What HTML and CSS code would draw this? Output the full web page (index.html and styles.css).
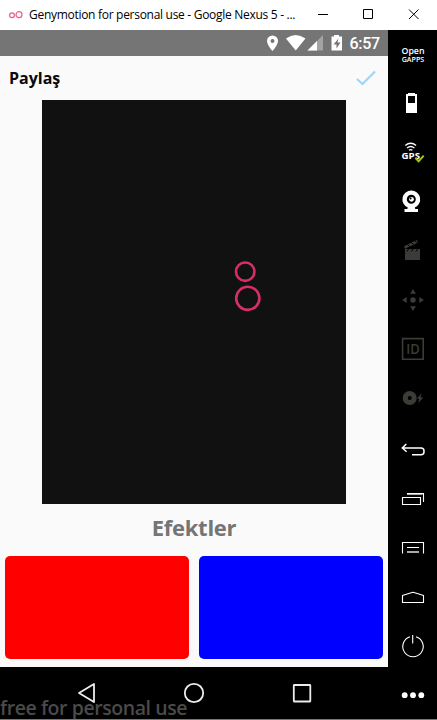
FILE: index.html
```html
<!DOCTYPE html>
<html lang="tr">
<head>
<meta charset="utf-8">
<title>Genymotion</title>
<link rel="stylesheet" href="styles.css">
</head>
<body>
<div class="window">
  <header class="titlebar">
    <svg class="logo" width="16" height="12" viewBox="0 0 16 12"><circle cx="4" cy="6.3" r="2.4"/><circle cx="11" cy="5.7" r="3"/></svg>
    <span class="title">Genymotion for personal use - Google Nexus 5 - ...</span>
    <svg class="controls" width="120" height="30" viewBox="0 0 120 30"><path d="M1 14.5h10M46.500 9.500h9v9h-9zM92 9.500l9.500 9.500M101.500 9.500L92 19"/></svg>
  </header>
  <div class="body">
    <main class="phone">
      <div class="status">
        <svg width="82" height="26" viewBox="0 0 82 26">
          <path d="M6.500 5.500a5.500 5.500 0 0 0-5.500 5.500c0 4 5.500 10 5.500 10s5.500-6 5.500-10a5.500 5.500 0 0 0-5.500-5.500zm0 3.500a2 2 0 1 1 0 4 2 2 0 0 1 0-4z" fill-rule="evenodd"/>
          <path d="M20 8.500Q29.500 1.500 39.500 8.500L29.700 20.500z"/>
          <path class="dim" d="M57 5v15.500H41.500z"/><path d="M51 11v9.500h-9.500z"/>
          <path fill-rule="evenodd" d="M68 5h5v1.500h3v14H65.500v-14H68zM72.500 8.500l-5 6h3v4l4-6h-3z"/>
        </svg>
        <span class="clock">6:57</span>
      </div>
      <div class="appbar">
        <h1>Paylaş</h1>
        <svg width="22" height="18" viewBox="0 0 22 18"><path d="M1 10l5.500 5L19 2.500"/></svg>
      </div>
      <div class="preview">
        <svg width="304" height="404" viewBox="0 0 304 404"><circle cx="203.200" cy="171.700" r="9.200"/><circle cx="205.800" cy="198.300" r="11.600"/></svg>
      </div>
      <h2>Efektler</h2>
      <div class="effects"><div class="card red"></div><div class="card blue"></div></div>
      <div class="navbar">
        <svg width="388" height="52" viewBox="0 0 388 52"><path d="M94 17v18L79 26z"/><circle cx="194" cy="26" r="9.200"/><rect x="293.800" y="18" width="16.500" height="16.500" rx=".5"/></svg>
        <span class="watermark">free for personal use</span>
      </div>
    </main>
    <aside class="tools">
      <svg viewBox="0 0 49 49"><text class="open" x="13.500" y="24" textLength="23" lengthAdjust="spacingAndGlyphs">Open</text><text class="gapps" x="13.700" y="31.800" textLength="22.500" lengthAdjust="spacingAndGlyphs">GAPPS</text></svg>
      <svg viewBox="0 0 49 49"><path fill-rule="evenodd" d="M20 14h7v1h2v19H18V15h2zM20 17v7h7v-7z"/></svg>
      <svg viewBox="0 0 49 49"><path class="line thick" d="M17.300 17.500q5.400-4.500 10.800 0M19 20q3.700-3 7.400 0M21 22.300q1.700-1.300 3.400 0"/><text class="gps" x="13.500" y="31" textLength="18.500" lengthAdjust="spacingAndGlyphs">GPS</text><path class="tick" d="M27.500 30l3.200 3.300 5-5.600"/></svg>
      <svg viewBox="0 0 49 49"><path fill-rule="evenodd" d="M23.300 13.500a8.800 8.800 0 0 1 3.500 16.900l.5 1.600H30v3H16.500v-3h2.800l.5-1.600a8.800 8.800 0 0 1 3.500-16.900zm0 4.300a4.500 4.500 0 1 0 0 9 4.500 4.500 0 0 0 0-9z"/><circle cx="23.500" cy="22.300" r="2.400"/><circle class="hole" cx="22.600" cy="21.500" r="1"/></svg>
      <svg class="off" viewBox="0 0 49 49"><path d="M17 23h15v11H17zM16 20.300l13-6.300.8 2.700L17 22.700z"/><path class="cut" d="M19.500 18.500l2 2M23.500 16.500l2 2M27 14.800l2 2M20.500 23L19 25.500M25 23l-1.500 2.500M29.500 23L28 25.500"/></svg>
      <svg class="off" viewBox="0 0 49 49"><circle cx="25" cy="25" r="2.700"/><path d="M25 14l2.900 4.700h-5.800zM25 36l2.900-4.700h-5.800zM14 25l4.700-2.900v5.800zM36 25l-4.700-2.900v5.800z"/></svg>
      <svg class="off" viewBox="0 0 49 49"><path class="frame" d="M14.600 14.600h20.600v20.600H14.600z"/><text class="id" x="18.300" y="29.900" textLength="13.500" lengthAdjust="spacingAndGlyphs">ID</text></svg>
      <svg class="off" viewBox="0 0 49 49"><path fill-rule="evenodd" d="M21.700 18a7 7 0 1 1 0 14 7 7 0 0 1 0-14zm0 5a2 2 0 1 0 0 4 2 2 0 0 0 0-4z"/><path d="M33.300 20.500l-4.500 5.200h2.500L30.300 30l5-5.500h-2.700z"/></svg>
      <svg class="back" viewBox="0 0 49 49"><path class="line mid" d="M18.300 19l-4 4 4.400 3.700M14.500 23H33q3 0 3 3v.8q0 3-3 3h-9"/></svg>
      <svg viewBox="0 0 49 49"><path class="line" d="M14.500 23.500h18v7h-18zM19 19.500h16.500V28"/><path class="line soft" d="M19 20.500h15.500"/></svg>
      <svg viewBox="0 0 49 49"><path class="line" d="M14.500 30.500v-11h21v11M19 24.500h12"/><path class="line soft double" d="M19 29h12"/></svg>
      <svg viewBox="0 0 49 49"><path class="line" d="M14.500 30.500v-7Q20 21.500 25 20.300q5 1.200 10.500 3.200v7z"/></svg>
      <svg viewBox="0 0 49 49"><path class="line" d="M22 15.800a10.200 10.200 0 1 0 6 0M24.700 14v8.500"/></svg>
      <svg viewBox="0 0 49 49"><circle cx="16.700" cy="25.200" r="2.900"/><circle cx="25" cy="25.200" r="2.900"/><circle cx="33.300" cy="25.200" r="2.900"/></svg>
    </aside>
  </div>
</div>
</body>
</html>
```
FILE: styles.css
```css
* { box-sizing: border-box; }
body { margin: 0; font-family: "Open Sans", sans-serif; }
svg { display: block; flex: none; }
.window { width: 437px; height: 720px; display: flex; flex-direction: column; background: #000; border-bottom: 1px solid #3f86bd; overflow: hidden; }
.titlebar { height: 30px; flex: none; display: flex; align-items: center; background: #fff; padding-left: 8px; }
.logo { fill: none; stroke: #ee5c8b; stroke-width: 1.2; }
.title { margin-left: 5px; width: 288px; font: 12px/30px "Open Sans", sans-serif; letter-spacing: -0.29px; white-space: nowrap; color: #000; }
.controls { fill: none; stroke: #000; stroke-width: 1; }
.body { display: flex; height: 689px; }
.phone { width: 388px; display: flex; flex-direction: column; background: #fafafa; }
.status { height: 26px; flex: none; background: #757575; display: flex; padding-left: 266px; fill: #fff; }
.status .dim { fill: #a3a3a3; }
.clock { color: #fff; font: 500 16px/27px Roboto, sans-serif; margin-left: 1.5px; letter-spacing: -0.3px; }
.appbar { height: 44px; flex: none; display: flex; align-items: center; justify-content: space-between; padding: 0 10px 0 9px; }
.appbar svg { fill: none; stroke: #9dd6fc; stroke-width: 2.2; }
h1 { margin: 0; font-size: 16px; font-weight: 700; line-height: 44px; color: #0a0a0a; }
.preview { width: 304px; height: 404px; margin-left: 42px; flex: none; background: #111; }
.preview svg { fill: none; stroke: #d62f66; stroke-width: 2.6; }
h2 { margin: 0; height: 52px; flex: none; font-size: 22px; line-height: 47px; letter-spacing: -0.25px; text-align: center; color: #757575; }
.effects { display: flex; gap: 10px; padding: 0 5px; height: 111px; flex: none; }
.card { flex: 1; height: 103px; border-radius: 5px; }
.red { background: #f00; }
.blue { background: #00f; }
.navbar { position: relative; height: 52px; background: #000; }
.navbar svg { fill: none; stroke: #ececec; stroke-width: 1.8; stroke-linejoin: round; }
.watermark { position: absolute; left: 0; bottom: -3px; font-size: 19.5px; font-weight: 600; line-height: 28px; letter-spacing: -0.42px; color: #4a4a4a; white-space: nowrap; }
.tools { width: 49px; background: #000; fill: #fff; }
.tools svg { width: 49px; height: 49px; }
.tools .back { margin-top: 3px; }
.tools .off { fill: #3b3b38; }
.line { fill: none; stroke: #fff; stroke-width: 1.1; }
.thick { stroke-width: 1.3; }
.mid { stroke-width: 1.5; }
.soft { stroke: #aaa; }
.double { stroke-width: 2; }
.tick { fill: none; stroke: #a2c614; stroke-width: 2; }
.hole { fill: #000; }
.cut { stroke: #000; stroke-width: 1; }
.frame { fill: none; stroke: #3b3b38; stroke-width: 1.6; }
.open { font: 600 9px "Open Sans", sans-serif; }
.gapps { font: 600 7px "Open Sans", sans-serif; }
.gps { font: 700 8px "Open Sans", sans-serif; }
.id { font: 600 13.5px "Open Sans", sans-serif; }
```
